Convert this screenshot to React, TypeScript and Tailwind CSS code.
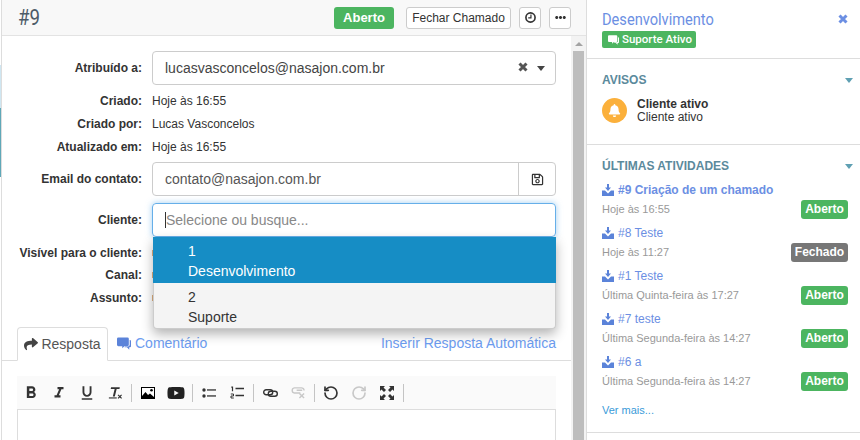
import React from "react";
import { MdFormatBold, MdFormatItalic, MdFormatUnderlined } from "react-icons/md";
import { FaYoutube, FaShare, FaBell, FaRegSave, FaEllipsisH } from "react-icons/fa";
import { RotateCcw, RotateCw } from "lucide-react";

const sans = "font-['Liberation_Sans',Arial,sans-serif]";

function Bubble({ className }: { className?: string }) {
  return (
    <svg viewBox="0 0 16 14" className={className} fill="currentColor">
      <path d="M1.500 0h10.500a1.500 1.500 0 0 1 1.500 1.500v7a1.500 1.500 0 0 1-1.500 1.500H8.500L6 12.500V10H1.500A1.500 1.500 0 0 1 0 8.500v-7A1.500 1.500 0 0 1 1.500 0z" />
      <path d="M14.500 3h.300A1.200 1.200 0 0 1 16 4.200v6a1.200 1.200 0 0 1-1.200 1.200H14V14l-2.600-2.600H8.500l1-1H12.500a2 2 0 0 0 2-2z" />
    </svg>
  );
}

function HeavyX({ className }: { className?: string }) {
  return (
    <svg viewBox="0 0 10 10" className={className} fill="none" stroke="currentColor" strokeWidth="3">
      <path d="M1.500 1.500l7 7M8.500 1.500l-7 7" />
    </svg>
  );
}

function Caret({ color }: { color: string }) {
  return (
    <svg viewBox="0 0 8 5" className="w-[8px] h-[5px]" fill={color}>
      <path d="M0 0h8L4 5z" />
    </svg>
  );
}

function Inbox() {
  return (
    <svg viewBox="0 0 12 12" className="w-[12px] h-[12px] mr-[4px] shrink-0" fill="#5b83d9">
      <path d="M5 0h2v3.500h2L6 7 3 3.500h2z" />
      <path d="M0 6.500h3l3 3 3-3h3V12H0z" />
    </svg>
  );
}

function Row({ label, children, h = "h-[23px]", mt = "" }: { label: string; children: React.ReactNode; h?: string; mt?: string }) {
  return (
    <div className={`flex items-center ${h} ${mt}`}>
      <div className="w-[140px] text-right text-[12px] font-bold text-[#333] shrink-0">{label}</div>
      <div className="ml-[10px] flex-1 min-w-0 h-full flex items-center text-[12px] text-[#333]">{children}</div>
    </div>
  );
}

function Sep() {
  return <div className="w-px h-[18px] bg-[#c4c4c4] mx-[2px]" />;
}

function Tool({ children }: { children: React.ReactNode }) {
  return <div className="w-[28px] h-[18px] flex items-center justify-center text-[#333]">{children}</div>;
}

function ClearFormat() {
  return (
    <svg viewBox="0 0 16 16" className="w-[14px] h-[16px]" fill="#333">
      <path d="M3.500 1.500h10l-.4 2H9.900L7.800 12H5.500l2.100-8.500H3.100z" />
      <rect x="1" y="13" width="9" height="1.300" />
      <path d="M11 10.500l.9-.9 1.600 1.600 1.600-1.600.9.900-1.600 1.600 1.600 1.600-.9.900-1.600-1.600-1.600 1.600-.9-.900 1.600-1.600z" />
    </svg>
  );
}

function ImageIcon() {
  return (
    <svg viewBox="0 0 14 12" className="w-[14px] h-[12px]">
      <rect x="0.500" y="0.500" width="13" height="11" fill="#fff" stroke="#000" />
      <path d="M1 11V9l3.500-4 2.500 3 2-1.500L13 10v1z" fill="#000" />
      <circle cx="10.500" cy="3.300" r="1.300" fill="#000" />
    </svg>
  );
}

function Bullets() {
  return (
    <svg viewBox="0 0 14 12" className="w-[14px] h-[12px]" fill="#333">
      <circle cx="2" cy="3" r="1.700" />
      <circle cx="2" cy="9" r="1.700" />
      <rect x="5" y="2.300" width="9" height="1.300" />
      <rect x="5" y="8.300" width="9" height="1.300" />
    </svg>
  );
}

function Numbers() {
  return (
    <svg viewBox="0 0 14 13" className="w-[14px] h-[13px]" fill="none" stroke="#333" strokeWidth="1.200">
      <path d="M1.300 1.200h1.200v4" />
      <path d="M.8 8h2.700v2H1v2h2.800" strokeWidth="1" />
      <path d="M5.500 2.500H14M5.500 9.500H14" strokeWidth="1.300" />
    </svg>
  );
}

function LinkIcon() {
  return (
    <svg viewBox="0 0 15 8" className="w-[15px] h-[8px]" fill="none" stroke="#333" strokeWidth="1.400">
      <rect x="0.700" y="0.700" width="9" height="5" rx="2.500" />
      <rect x="5.300" y="2.300" width="9" height="5" rx="2.500" />
    </svg>
  );
}

function Unlink() {
  return (
    <svg viewBox="0 0 16 14" className="w-[15px] h-[13px]" fill="none" stroke="#c8c8c8" strokeWidth="1.500">
      <path d="M10 7.500H3.500a2.800 2.800 0 0 1 0-5.500h7.500a2.800 2.800 0 0 1 3 2.800" />
      <path d="M6 4.500h6M9 8l5 5M14 8l-5 5" />
    </svg>
  );
}

function Clock() {
  return (
    <svg viewBox="0 0 12 12" className="w-[11px] h-[11px]" fill="none" stroke="#333">
      <circle cx="6" cy="6" r="5" strokeWidth="1.800" />
      <path d="M6.500 2.800V6.500H3.500" strokeWidth="1.300" />
    </svg>
  );
}

function Fullscreen() {
  return (
    <svg viewBox="0 0 14 14" className="w-[14px] h-[14px]" fill="#333" stroke="none">
      <path d="M0 0h5L3.500 1.500 6 4 4 6 1.500 3.500 0 5z" />
      <path d="M14 0H9l1.500 1.500L8 4l2 2 2.500-2.500L14 5z" />
      <path d="M0 14h5l-1.500-1.500L6 10 4 8l-2.500 2.500L0 9z" />
      <path d="M14 14H9l1.500-1.500L8 10l2-2 2.500 2.500L14 9z" />
    </svg>
  );
}

function Badge({ children, gray }: { children: React.ReactNode; gray?: boolean }) {
  return (
    <span className={`${gray ? "bg-[#777777] w-[57px]" : "bg-[#4cb560] w-[47px]"} h-[19px] -mt-[1px] rounded-[3px] flex items-center justify-center text-white text-[12px] font-bold shrink-0`}>
      {children}
    </span>
  );
}

function Activity({ title, time, status, bold }: { title: string; time: string; status: string; bold?: boolean }) {
  return (
    <div className="h-[43px]">
      <div className={`h-[20px] flex items-center text-[12px] text-[#6c8fe3] ${bold ? "font-bold" : ""}`}>
        <Inbox />
        {title}
      </div>
      <div className="h-[19px] flex items-center justify-between text-[11px] text-[#999]">
        <span>{time}</span>
        <Badge gray={status === "Fechado"}>{status}</Badge>
      </div>
    </div>
  );
}

export default function App() {
  return (
    <div className={`flex w-[860px] h-[440px] overflow-hidden bg-white ${sans}`}>
      <div className="w-px shrink-0 flex flex-col">
        <div className="h-[65px]" />
        <div className="h-[43px] bg-[#cfe6f1]" />
        <div className="h-[69px] bg-[#5fa8b8]" />
      </div>
      <main className="w-[586px] shrink-0 flex flex-col border-x border-[#dddddd]">
        <header className="h-[36px] shrink-0 flex items-center bg-[#f8f8f8] border-b border-[#e3e3e3] pl-[16px] pr-[15px]">
          <h1 className="font-['Roboto',sans-serif] text-[22px] leading-[28px] text-[#4d5c69] font-normal scale-x-[0.85] origin-left">#9</h1>
          <span className="ml-auto w-[60px] h-[22px] rounded-[3px] bg-[#4cb560] text-white text-[13px] font-bold flex items-center justify-center">Aberto</span>
          <button className="ml-[12px] w-[105px] h-[22px] rounded-[3px] border border-[#cccccc] bg-white text-[12px] text-[#333]">Fechar Chamado</button>
          <button className="ml-[8px] w-[22px] h-[22px] rounded-[3px] border border-[#cccccc] bg-white flex items-center justify-center"><Clock /></button>
          <button className="ml-[8px] w-[22px] h-[22px] rounded-[3px] border border-[#cccccc] bg-white flex items-center justify-center text-[#333]"><FaEllipsisH className="w-[11px] h-[11px]" /></button>
        </header>
        <div className="flex flex-1 min-h-0">
          <div className="w-[569px] shrink-0 pt-[15px]">
            <div className="pr-[15px]">
              <Row label="Atribuído a:" h="h-[34px]">
                <div className="w-full h-full rounded-[4px] border border-[#cccccc] flex items-center pl-[12px] pr-[10px] text-[14px] text-[#555]">
                  <span className="text-[#444]">lucasvasconcelos@nasajon.com.br</span>
                  <HeavyX className="ml-auto -mt-[2px] w-[10px] h-[10px] text-[#555]" />
                  <span className="ml-[9px]"><Caret color="#444" /></span>
                </div>
              </Row>
              <Row label="Criado:" mt="mt-[4px]">Hoje às 16:55</Row>
              <Row label="Criado por:">Lucas Vasconcelos</Row>
              <Row label="Atualizado em:">Hoje às 16:55</Row>
              <Row label="Email do contato:" h="h-[34px]" mt="mt-[4px]">
                <div className="w-full h-full rounded-[4px] border border-[#cccccc] flex items-center text-[14px] text-[#555]">
                  <span className="pl-[12px] flex-1">contato@nasajon.com.br</span>
                  <span className="w-[37px] h-full border-l border-[#cccccc] flex items-center justify-center text-[#333]"><FaRegSave className="w-[13px] h-[13px]" /></span>
                </div>
              </Row>
              <Row label="Cliente:" h="h-[34px]" mt="mt-[7px]">
                <div className="relative w-full h-full">
                  <div className="w-full h-full rounded-[4px] border border-[#66afe9] shadow-[0_0_6px_rgba(102,175,233,0.6)] flex items-center pl-[12px] text-[14px] text-[#888]">
                    <span className="w-px h-[16px] bg-[#333]" />
                    <span>Selecione ou busque...</span>
                  </div>
                  <div className="absolute left-px top-full w-[403px] bg-[#f4f4f4] rounded-b-[4px] shadow-[0_5px_12px_rgba(0,0,0,0.3)] border-x border-b border-[#cccccc] z-10 text-[14px]">
                    <div className="-mx-px h-[46px] bg-[#168dc5] text-white pl-[35px] pt-[4px] leading-[20px]"><div>1</div><div>Desenvolvimento</div></div>
                    <div className="h-[45px] text-[#333] pl-[34px] pt-[4px] leading-[20px]"><div>2</div><div>Suporte</div></div>
                  </div>
                </div>
              </Row>
              <Row label="Visível para o cliente:" h="h-[22px]" mt="mt-[5px]"><span className="w-px h-[6px] bg-[#e0b080]" /></Row>
              <Row label="Canal:" h="h-[22px]"><span className="w-px h-[6px] bg-[#e0b080]" /></Row>
              <Row label="Assunto:" h="h-[24px]"><span className="w-px h-[6px] bg-[#e0b080]" /></Row>
            </div>
            <div className="mt-[17px] h-[34px] border-b border-[#dddddd] flex items-end pl-[15px] pr-[15px] text-[14px]">
              <div className="w-[91px] h-[34px] -mb-px flex items-center justify-center gap-[3px] border border-b-white border-[#dddddd] rounded-t-[4px] bg-white text-[#555]">
                <FaShare className="w-[14px] h-[14px] text-[#444]" />
                <span>Resposta</span>
              </div>
              <div className="ml-[9px] h-[33px] flex items-center gap-[4px] text-[#6c9cf0]">
                <Bubble className="w-[14px] h-[13px] text-[#5b83d9]" />
                <span>Comentário</span>
              </div>
              <div className="ml-auto h-[33px] flex items-center text-[#6c9cf0]">Inserir Resposta Automática</div>
            </div>
            <div className="ml-[15px] mr-[15px] mt-[15px] h-[33px] bg-[#fafafa] flex items-center">
              <Tool><MdFormatBold className="w-[20px] h-[20px]" /></Tool>
              <Tool><MdFormatItalic className="w-[18px] h-[18px]" /></Tool>
              <Tool><MdFormatUnderlined className="w-[18px] h-[18px]" /></Tool>
              <Tool><ClearFormat /></Tool>
              <Sep />
              <Tool><ImageIcon /></Tool>
              <Tool><FaYoutube className="w-[18px] h-[18px] text-[#222]" /></Tool>
              <Sep />
              <Tool><Bullets /></Tool>
              <Tool><Numbers /></Tool>
              <Sep />
              <Tool><LinkIcon /></Tool>
              <Tool><Unlink /></Tool>
              <Sep />
              <Tool><RotateCcw className="w-[16px] h-[16px]" strokeWidth={2.5} /></Tool>
              <Tool><RotateCw className="w-[16px] h-[16px] text-[#c8c8c8]" strokeWidth={2.5} /></Tool>
              <Tool><Fullscreen /></Tool>
              <Sep />
            </div>
            <div className="ml-[15px] mr-[15px] h-[60px] border border-[#dddddd]" />
          </div>
          <div className="w-[15px] shrink-0 bg-[#f3f3f3] flex flex-col items-center pt-[6px]">
            <div className="w-0 h-0 border-x-[4px] border-x-transparent border-b-[4px] border-b-[#a3a3a3]" />
            <div className="mt-[5px] w-[11px] flex-1 bg-[#bdbdbd]" />
          </div>
        </div>
      </main>
      <aside className="flex-1 min-w-0 flex flex-col">
        <div className="h-[59px] shrink-0 border-b border-[#dddddd] pl-[15px] pr-[12px] pt-[9px]">
          <div className="flex items-start justify-between">
            <h2 className="font-['Roboto',sans-serif] text-[17px] leading-[20px] text-[#6c8fe3] font-normal scale-x-[0.86] origin-left">Desenvolvimento</h2>
            <HeavyX className="mt-[5px] w-[10px] h-[10px] text-[#6c8fe3]" />
          </div>
          <span className="mt-[2px] w-[94px] h-[17px] rounded-[2px] bg-[#4cb560] text-white text-[11.500px] font-medium font-['Roboto',sans-serif] flex items-center pl-[6px] gap-[3px]">
            <Bubble className="w-[11px] h-[10px] shrink-0" />
            <span className="whitespace-nowrap">Suporte Ativo</span>
          </span>
        </div>
        <div className="h-[86px] shrink-0 border-b border-[#dddddd] pl-[15px] pr-[7px] pt-[14px]">
          <div className="flex items-center justify-between h-[14px]">
            <span className="text-[12px] font-bold text-[#5b8a9c]">AVISOS</span>
            <Caret color="#5fa0b3" />
          </div>
          <div className="mt-[10px] flex items-center">
            <span className="w-[25px] h-[25px] rounded-full bg-[#fbb03b] flex items-center justify-center"><FaBell className="w-[13px] h-[13px] text-white" /></span>
            <div className="ml-[10px] pt-[1px] text-[12px] leading-[13px] text-[#333]">
              <div className="font-bold">Cliente ativo</div>
              <div>Cliente ativo</div>
            </div>
          </div>
        </div>
        <div className="h-[288px] shrink-0 border-b border-[#dddddd] pl-[15px] pr-[12px] pt-[14px]">
          <div className="flex items-center justify-between h-[14px] -mr-[5px]">
            <span className="text-[12px] font-bold text-[#5b8a9c]">ÚLTIMAS ATIVIDADES</span>
            <Caret color="#5fa0b3" />
          </div>
          <div className="mt-[7px]">
            <Activity bold title="#9 Criação de um chamado" time="Hoje às 16:55" status="Aberto" />
            <Activity title="#8 Teste" time="Hoje às 11:27" status="Fechado" />
            <Activity title="#1 Teste" time="Última Quinta-feira às 17:27" status="Aberto" />
            <Activity title="#7 teste" time="Última Segunda-feira às 14:27" status="Aberto" />
            <Activity title="#6 a" time="Última Segunda-feira às 14:27" status="Aberto" />
          </div>
          <div className="mt-[8px] text-[11px] leading-[14px] text-[#3a9bd9]">Ver mais...</div>
        </div>
      </aside>
    </div>
  );
}
